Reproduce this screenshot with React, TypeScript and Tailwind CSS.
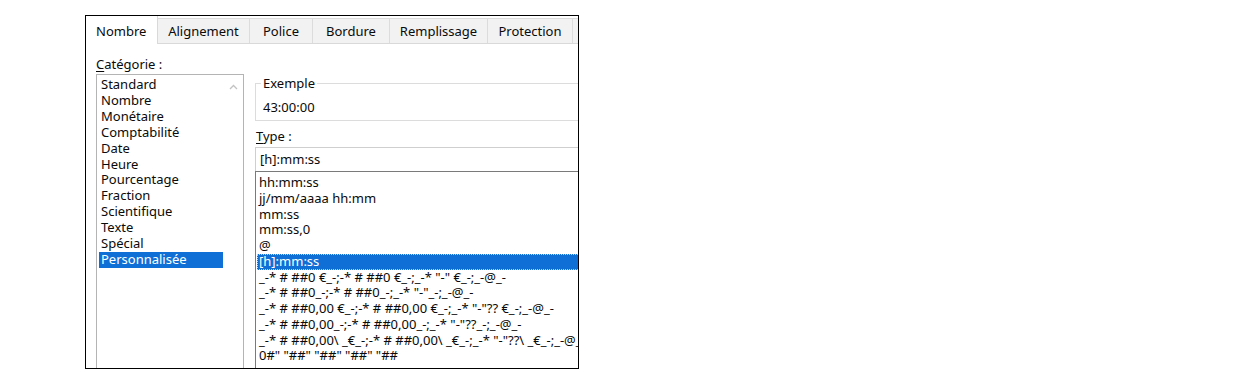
import React from 'react';

const tabs = [
  { label: 'Nombre', w: 'w-[72px]', active: true },
  { label: 'Alignement', w: 'w-[92px]' },
  { label: 'Police', w: 'w-[63px]' },
  { label: 'Bordure', w: 'w-[77px]' },
  { label: 'Remplissage', w: 'w-[98px]' },
  { label: 'Protection', w: 'w-[85px]' },
  { label: '', w: 'w-[30px]' },
];

const categories = [
  'Standard',
  'Nombre',
  'Monétaire',
  'Comptabilité',
  'Date',
  'Heure',
  'Pourcentage',
  'Fraction',
  'Scientifique',
  'Texte',
  'Spécial',
  'Personnalisée',
];

const formats = [
  'hh:mm:ss',
  'jj/mm/aaaa hh:mm',
  'mm:ss',
  'mm:ss,0',
  '@',
  '[h]:mm:ss',
  '_-* # ##0 €_-;-* # ##0 €_-;_-* "-" €_-;_-@_-',
  '_-* # ##0_-;-* # ##0_-;_-* "-"_-;_-@_-',
  '_-* # ##0,00 €_-;-* # ##0,00 €_-;_-* "-"?? €_-;_-@_-',
  '_-* # ##0,00_-;-* # ##0,00_-;_-* "-"??_-;_-@_-',
  '_-* # ##0,00\\ _€_-;-* # ##0,00\\ _€_-;_-* "-"??\\ _€_-;_-@_-',
  '0#" "##" "##" "##" "##',
];

const App = () => {
  return (
    <div className="h-[380px] w-[1253px] bg-white pl-[85px] pt-[15px] font-['Noto_Sans','Open_Sans',sans-serif] text-[13px] text-[#0a0a0a]">
      <div className="flex h-[354px] w-[494px] flex-col overflow-hidden border border-black bg-white">
        {/* onglets */}
        <div className="flex h-[28px] shrink-0 items-end border-b border-[#d9d9d9]">
          {tabs.map(({ label, w, active }) =>
            active ? (
              <div
                key={label}
                className={`${w} -mb-px flex h-[28px] shrink-0 items-center border-r border-[#d9d9d9] bg-white pl-[10px] pt-[3px]`}
              >
                {label}
              </div>
            ) : (
              <div
                key={label || 'x'}
                className={`${w} flex h-[25px] shrink-0 items-center justify-center border-r border-t border-[#dcdcdc] bg-[#f2f2f2] pt-[2px]`}
              >
                {label}
              </div>
            )
          )}
        </div>

        <div className="flex min-h-0 flex-1 gap-[11px] pl-[10px] pt-[12px]">
          {/* Catégorie */}
          <div className="flex w-[148px] shrink-0 flex-col">
            <p className="h-[16px] leading-[16px]">
              <span className="underline underline-offset-2">C</span>atégorie :
            </p>
            <div className="mt-[2px] flex flex-1 border border-b-0 border-[#b4b4b4]">
              <ul className="w-[126px] pl-[2px] pt-[2px] leading-[15.9px]">
                {categories.map((c) => (
                  <li
                    key={c}
                    className={
                      c === 'Personnalisée'
                        ? 'bg-[#0f6fd6] pl-[2px] text-white'
                        : 'pl-[2px]'
                    }
                  >
                    {c}
                  </li>
                ))}
              </ul>
              <div className="flex flex-1 justify-center pt-[9px]">
                <svg width="9" height="6" viewBox="0 0 9 6">
                  <path d="M1 5 L4.5 1.5 L8 5" fill="none" stroke="#c2c2c2" strokeWidth="1.3" />
                </svg>
              </div>
            </div>
          </div>

          {/* Exemple / Type */}
          <div className="flex w-[340px] shrink-0 flex-col pt-[19px]">
            <fieldset className="border border-[#dcdcdc] pb-[5px] pl-[7px]">
              <legend className="-ml-[2px] px-[2px] leading-[16px]">Exemple</legend>
              <p className="pt-[8px] leading-[16px]">43:00:00</p>
            </fieldset>
            <p className="mt-[7px] h-[16px] pl-[1px] leading-[16px]">
              <span className="underline underline-offset-2">T</span>ype :
            </p>
            <div className="mt-[3px] flex h-[24px] items-center border border-b-0 border-[#cfcfcf] pl-[4px]">
              [h]:mm:ss
            </div>
            <ul className="flex-1 whitespace-nowrap border-x border-t border-[#7a7a7a] pl-[1px] pt-[3px] leading-[15.75px]">
              {formats.map((f) => (
                <li
                  key={f}
                  className={
                    f === '[h]:mm:ss'
                      ? 'bg-[#0f6fd6] pl-[2px] text-white outline-1 outline-dotted outline-offset-[-1px] outline-[#bcd6f5]'
                      : 'pl-[2px]'
                  }
                >
                  {f}
                </li>
              ))}
            </ul>
          </div>
        </div>
      </div>
    </div>
  );
};

export default App;
